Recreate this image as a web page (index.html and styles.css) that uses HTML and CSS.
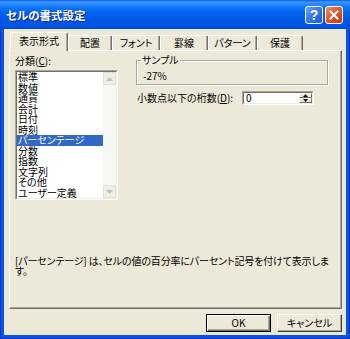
FILE: index.html
```html
<!DOCTYPE html>
<html lang="ja">
<head>
<meta charset="utf-8">
<title>セルの書式設定</title>
<link rel="stylesheet" href="styles.css">
</head>
<body>
<div class="window">
  <div class="titlebar">
    <span class="title">セルの書式設定</span>
    <div class="caption-btns">
      <span class="cap-btn help">?</span>
      <span class="cap-btn close"><svg width="10" height="10" viewBox="0 0 10 10"><path d="M1.5 1.5 L8.5 8.5 M8.5 1.5 L1.5 8.5" stroke="#fff" stroke-width="2" stroke-linecap="square"/></svg></span>
    </div>
  </div>
  <div class="client">
    <div class="tabs">
      <div class="tab active t1">表示形式</div>
      <div class="tab t2">配置</div>
      <div class="tab t3">フォント</div>
      <div class="tab t4">罫線</div>
      <div class="tab t5">パターン</div>
      <div class="tab t6">保護</div>
    </div>
    <div class="panel">
      <div class="top">
        <div class="category">
          <div class="label">分類(<u>C</u>):</div>
          <div class="listbox">
            <div class="listbox-inner">
              <ul class="items">
                <li>標準</li>
                <li>数値</li>
                <li>通貨</li>
                <li>会計</li>
                <li>日付</li>
                <li>時刻</li>
                <li class="selected">パーセンテージ</li>
                <li>分数</li>
                <li>指数</li>
                <li>文字列</li>
                <li>その他</li>
                <li>ユーザー定義</li>
              </ul>
              <div class="scrollbar">
                <span class="arrow"><svg width="7" height="4" viewBox="0 0 7 4"><path d="M0 4 L3.5 0 L7 4 Z" fill="#C4C2B6"/></svg></span>
                <span class="track"></span>
                <span class="arrow"><svg width="7" height="4" viewBox="0 0 7 4"><path d="M0 0 L3.5 4 L7 0 Z" fill="#C4C2B6"/></svg></span>
              </div>
            </div>
          </div>
        </div>
        <div class="options">
          <fieldset class="sample">
            <legend>サンプル</legend>
            <div class="sample-value">-27%</div>
          </fieldset>
          <div class="decimals">
            <span class="dec-label">小数点以下の桁数(<u>D</u>):</span>
            <div class="spin">
              <div class="spin-inner">
                <span class="spin-value">0</span>
                <div class="spin-btns">
                  <span class="spin-btn"><svg width="5" height="3" viewBox="0 0 5 3"><path d="M0 3 L2.5 0 L5 3 Z" fill="#000"/></svg></span>
                  <span class="spin-btn"><svg width="5" height="3" viewBox="0 0 5 3"><path d="M0 0 L2.5 3 L5 0 Z" fill="#000"/></svg></span>
                </div>
              </div>
            </div>
          </div>
        </div>
      </div>
      <p class="desc">[パーセンテージ] は、セルの値の百分率にパーセント記号を付けて表示します。</p>
    </div>
    <div class="buttons">
      <button class="btn default">OK</button>
      <button class="btn">キャンセル</button>
    </div>
  </div>
</div>
</body>
</html>
```
FILE: styles.css
```css
html, body {
  margin: 0;
  padding: 0;
}
body {
  background: #ECE9D8;
  font-family: "Noto Sans CJK JP", "Noto Sans", sans-serif;
  font-size: 10px;
  color: #000;
  font-feature-settings: "palt";
}
.window {
  width: 350px;
  height: 339px;
  box-sizing: border-box;
  display: flex;
  flex-direction: column;
  background: #0855DD;
  box-shadow: inset 1px 0 #0831D9, inset -1px 0 #0831D9, inset 0 -1px #0831D9;
}
.titlebar {
  height: 29px;
  flex: none;
  display: flex;
  align-items: center;
  background: linear-gradient(to bottom, #0A5FE8 0px, #3D95FF 2px, #2A8BFF 4px, #0D72F8 8px, #0062EE 13px, #0058E6 20px, #0054E3 26px, #0048D6 29px);
}
.title {
  padding-left: 6px;
  color: #fff;
  font-size: 11.5px;
  font-weight: bold;
  line-height: 14px;
  text-shadow: 1px 1px #0F1F8A;
  flex: 1;
}
.caption-btns {
  display: flex;
  gap: 2px;
  margin-right: 7px;
}
.cap-btn {
  width: 18px;
  height: 18px;
  box-sizing: border-box;
  border: 1px solid #fff;
  border-radius: 3px;
  display: flex;
  align-items: center;
  justify-content: center;
}
.help {
  background: linear-gradient(135deg, #6FA2FB 0%, #3A78F2 45%, #1D58DC 100%);
  color: #fff;
  font-family: "Liberation Sans", sans-serif;
  font-weight: bold;
  font-size: 14px;
  line-height: 16px;
}
.close {
  background: linear-gradient(135deg, #F0906F 0%, #E2582F 45%, #C43C14 100%);
}
.client {
  flex: 1;
  margin: 0 4px 4px;
  background: #ECE9D8;
  display: flex;
  flex-direction: column;
}
.tabs {
  height: 21px;
  display: flex;
  align-items: flex-end;
  padding-left: 6px;
  position: relative;
  z-index: 1;
}
.tab {
  height: 15px;
  box-sizing: border-box;
  border-top: 1px solid #fff;
  border-left: 1px solid #fff;
  border-right: 1px solid #716F64;
  box-shadow: inset -1px 0 #ACA899;
  border-radius: 2px 2px 0 0;
  text-align: center;
  line-height: 14px;
  background: #ECE9D8;
}
.tab.active {
  height: 19px;
  margin-bottom: -1px;
  line-height: 16px;
}
.t1 { width: 58px; }
.t2 { width: 44px; }
.t3 { width: 48px; }
.t4 { width: 48px; }
.t5 { width: 49px; }
.t6 { width: 46px; }
.panel {
  margin-left: 5px;
  width: 333px;
  height: 259px;
  box-sizing: border-box;
  border: 1px solid;
  border-color: #fff #716F64 #716F64 #fff;
  box-shadow: inset -1px -1px #ACA899;
  padding: 4px 0 0 5px;
}
.top {
  display: flex;
  gap: 18px;
}
.category {
  width: 103px;
}
.label {
  line-height: 12px;
  height: 12px;
}
.listbox {
  margin-top: 3px;
  height: 130px;
  box-sizing: border-box;
  border: 1px solid;
  border-color: #ACA899 #fff #fff #ACA899;
}
.listbox-inner {
  height: 100%;
  box-sizing: border-box;
  border: 1px solid;
  border-color: #716F64 #F1EFE2 #F1EFE2 #716F64;
  background: #fff;
  display: flex;
}
.items {
  list-style: none;
  margin: 0;
  padding: 0;
  flex: 1;
}
.items li {
  height: 10.5px;
  line-height: 10.5px;
  padding-left: 1px;
  white-space: nowrap;
}
.items li.selected {
  background: #316AC5;
  color: #fff;
}
.scrollbar {
  width: 13px;
  display: flex;
  flex-direction: column;
  background: #F7F7F3;
}
.arrow {
  height: 13px;
  box-sizing: border-box;
  border: 1px solid #E2E0D6;
  background: #EEEDE6;
  border-radius: 1px;
  display: flex;
  align-items: center;
  justify-content: center;
}
.track {
  flex: 1;
}
.options {
  width: 192px;
}
.sample {
  margin: -1px 0 0;
  padding: 0 0 2px 6px;
  border: 1px solid #ACA899;
  box-shadow: 1px 1px 0 #fff, inset 1px 1px 0 #fff;
  min-width: 0;
}
.sample legend {
  padding: 0 1px;
  margin-left: -2px;
  line-height: 12px;
}
.sample-value {
  margin-top: 4px;
  line-height: 12px;
}
.decimals {
  margin-top: 6px;
  height: 14px;
  display: grid;
  grid-template-columns: 106px 72px;
  align-items: center;
}
.dec-label {
  padding-left: 1px;
  line-height: 12px;
  white-space: nowrap;
}
.spin {
  height: 14px;
  box-sizing: border-box;
  border: 1px solid;
  border-color: #ACA899 #fff #fff #ACA899;
}
.spin-inner {
  height: 100%;
  box-sizing: border-box;
  border: 1px solid;
  border-color: #716F64 #F1EFE2 #F1EFE2 #716F64;
  background: #fff;
  display: flex;
}
.spin-value {
  flex: 1;
  padding-left: 2px;
  line-height: 10px;
}
.spin-btns {
  width: 13px;
  display: flex;
  flex-direction: column;
}
.spin-btn {
  flex: 1;
  box-sizing: border-box;
  background: #ECE9D8;
  border: 1px solid;
  border-color: #fff #716F64 #716F64 #fff;
  display: flex;
  align-items: center;
  justify-content: center;
}
.desc {
  margin: 56px 0 0;
  width: 318px;
  line-height: 10px;
  letter-spacing: -0.15px;
}
.buttons {
  margin-top: 5px;
  display: flex;
  justify-content: flex-end;
  gap: 6px;
  padding-right: 4px;
}
.btn {
  width: 65px;
  height: 18px;
  box-sizing: border-box;
  margin: 0;
  padding: 0;
  font: inherit;
  line-height: 14px;
  color: #000;
  background: #ECE9D8;
  border: 1px solid;
  border-color: #fff #404040 #404040 #fff;
  box-shadow: inset -1px -1px #ACA899;
}
.btn.default {
  border: 1px solid #000;
  box-shadow: inset 1px 1px #fff, inset -1px -1px #716F64, inset -2px -2px #ACA899;
}
```
